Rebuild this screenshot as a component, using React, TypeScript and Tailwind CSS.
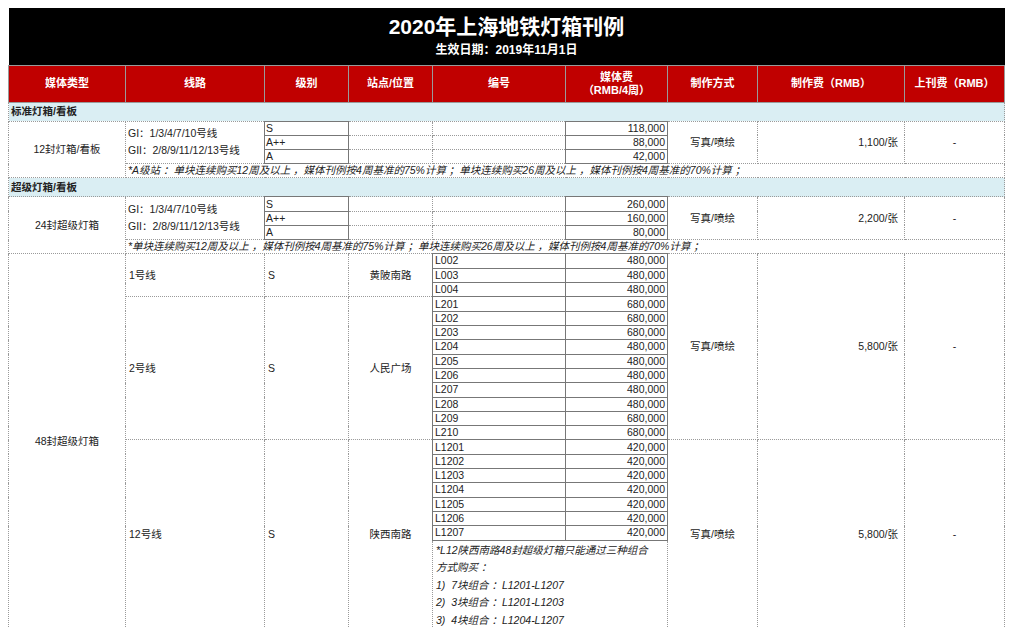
import React from "react";

const B = "border border-dotted border-[#9a9a9a]";
const S = "border border-solid border-[#777]";
const F = { fontFamily: '"Liberation Sans","Noto Sans CJK SC",sans-serif' };

export default function App() {
  const hdr = `${B} border-solid border-[#7a0000] text-white font-bold text-center`;
  const right3 = (fee: string, rs: number) => (<>
    <td rowSpan={rs} className={`${B} text-center`}>写真/喷绘</td>
    <td rowSpan={rs} className={`${B} text-right pr-[6px]`}>{fee}</td>
    <td rowSpan={rs} className={`${B} text-center`}>-</td>
  </>);
  const l1: [string, string][] = [["L002", "480,000"], ["L003", "480,000"], ["L004", "480,000"]];
  const l2: [string, string][] = [["L201", "680,000"], ["L202", "680,000"], ["L203", "680,000"], ["L204", "480,000"], ["L205", "480,000"], ["L206", "480,000"], ["L207", "480,000"], ["L208", "480,000"], ["L209", "680,000"], ["L210", "680,000"]];
  const l12: [string, string][] = ["L1201", "L1202", "L1203", "L1204", "L1205", "L1206", "L1207"].map(x => [x, "420,000"]);
  return (
    <div className="w-[1024px] h-[627px] overflow-hidden bg-white pt-[8px] pl-[8px] text-[10.5px] text-[#222]" style={F}>
      <table className="border-collapse table-fixed w-[996px] leading-[13px]">
        <colgroup>
          {[117, 139, 84, 84, 133, 102, 90, 147, 100].map((w, i) => <col key={i} style={{ width: w }} />)}
        </colgroup>
        <tbody>
          <tr className="h-[57px] bg-black">
            <td colSpan={9} className="text-center text-white font-bold">
              <div className="text-[21px] leading-[28px]">2020年上海地铁灯箱刊例</div>
              <div className="text-[12px] leading-[18px]">生效日期：2019年11月1日</div>
            </td>
          </tr>
          <tr className="h-[37px] bg-[#c00000] text-[11px]">
            <td className={hdr}>媒体类型</td><td className={hdr}>线路</td><td className={hdr}>级别</td><td className={hdr}>站点/位置</td><td className={hdr}>编号</td>
            <td className={hdr}>媒体费<br />（RMB/4周）</td><td className={hdr}>制作方式</td><td className={hdr}>制作费（RMB）</td><td className={hdr}>上刊费（RMB）</td>
          </tr>
          {[["标准灯箱/看板", "12封灯箱/看板", ["118,000", "88,000", "42,000"], "1,100/张", "*A级站 ：单块连续购买12周及以上 ，媒体刊例按4周基准的75%计算 ；单块连续购买26周及以上 ，媒体刊例按4周基准的70%计算 ；"],
            ["超级灯箱/看板", "24封超级灯箱", ["260,000", "160,000", "80,000"], "2,200/张", "*单块连续购买12周及以上 ，媒体刊例按4周基准的75%计算 ；单块连续购买26周及以上 ，媒体刊例按4周基准的70%计算 ；"]].map(([sec, name, prices, fee, note]) => (
            <React.Fragment key={sec as string}>
              <tr className="h-[19px] bg-[#daeef3]"><td colSpan={9} className={`${B} font-bold pl-[2px]`}>{sec}</td></tr>
              {(["S", "A++", "A"]).map((lv, i) => (
                <tr key={lv} className="h-[14.3px]">
                  {i === 0 && <td rowSpan={4} className={`${B} text-center`}>{name}</td>}
                  {i === 0 && <td rowSpan={3} className={`${B} pl-[2px] leading-[17px]`}>GI：1/3/4/7/10号线<br />GII：2/8/9/11/12/13号线</td>}
                  <td className={`${S} pl-[1px]`}>{lv}</td>
                  <td className={B}></td><td className={B}></td>
                  <td className={`${S} text-right pr-[2px]`}>{(prices as string[])[i]}</td>
                  {i === 0 && right3(fee as string, 3)}
                </tr>
              ))}
              <tr className="h-[14px]"><td colSpan={8} className={`${B} italic pl-[2px] whitespace-nowrap overflow-hidden`}>{note}</td></tr>
            </React.Fragment>
          ))}
          {l1.map(([a, b], i) => (
            <tr key={a} className="h-[14.4px]">
              {i === 0 && <>
                <td rowSpan={21} className={`${B} text-center`}>48封超级灯箱</td>
                <td rowSpan={3} className={`${B} pl-[3px]`}>1号线</td>
                <td rowSpan={3} className={`${B} pl-[3px]`}>S</td>
                <td rowSpan={3} className={`${B} text-center`}>黄陂南路</td>
              </>}
              <td className={`${S} pl-[2px]`}>{a}</td><td className={`${S} text-right pr-[2px]`}>{b}</td>
              {i === 0 && right3("5,800/张", 13)}
            </tr>
          ))}
          {l2.map(([a, b], i) => (
            <tr key={a} className="h-[14.3px]">
              {i === 0 && <><td rowSpan={10} className={`${B} pl-[3px]`}>2号线</td><td rowSpan={10} className={`${B} pl-[3px]`}>S</td><td rowSpan={10} className={`${B} text-center`}>人民广场</td></>}
              <td className={`${S} pl-[2px]`}>{a}</td><td className={`${S} text-right pr-[2px]`}>{b}</td>
            </tr>
          ))}
          {l12.map(([a, b], i) => (
            <tr key={a} className="h-[14.3px]">
              {i === 0 && <><td rowSpan={8} className={`${B} pl-[3px]`}>12号线</td><td rowSpan={8} className={`${B} pl-[3px]`}>S</td><td rowSpan={8} className={`${B} text-center`}>陕西南路</td></>}
              <td className={`${S} pl-[2px]`}>{a}</td><td className={`${S} text-right pr-[2px]`}>{b}</td>
              {i === 0 && right3("5,800/张", 8)}
            </tr>
          ))}
          <tr className="h-[90px]">
            <td colSpan={2} className={`${B} italic pl-[3px] align-top leading-[17.5px] pt-[1px]`}>
              *L12陕西南路48封超级灯箱只能通过三种组合<br />方式购买 ：<br />1)&nbsp; 7块组合 ：L1201-L1207<br />2)&nbsp; 3块组合 ：L1201-L1203<br />3)&nbsp; 4块组合 ：L1204-L1207
            </td>
          </tr>
        </tbody>
      </table>
    </div>
  );
}
